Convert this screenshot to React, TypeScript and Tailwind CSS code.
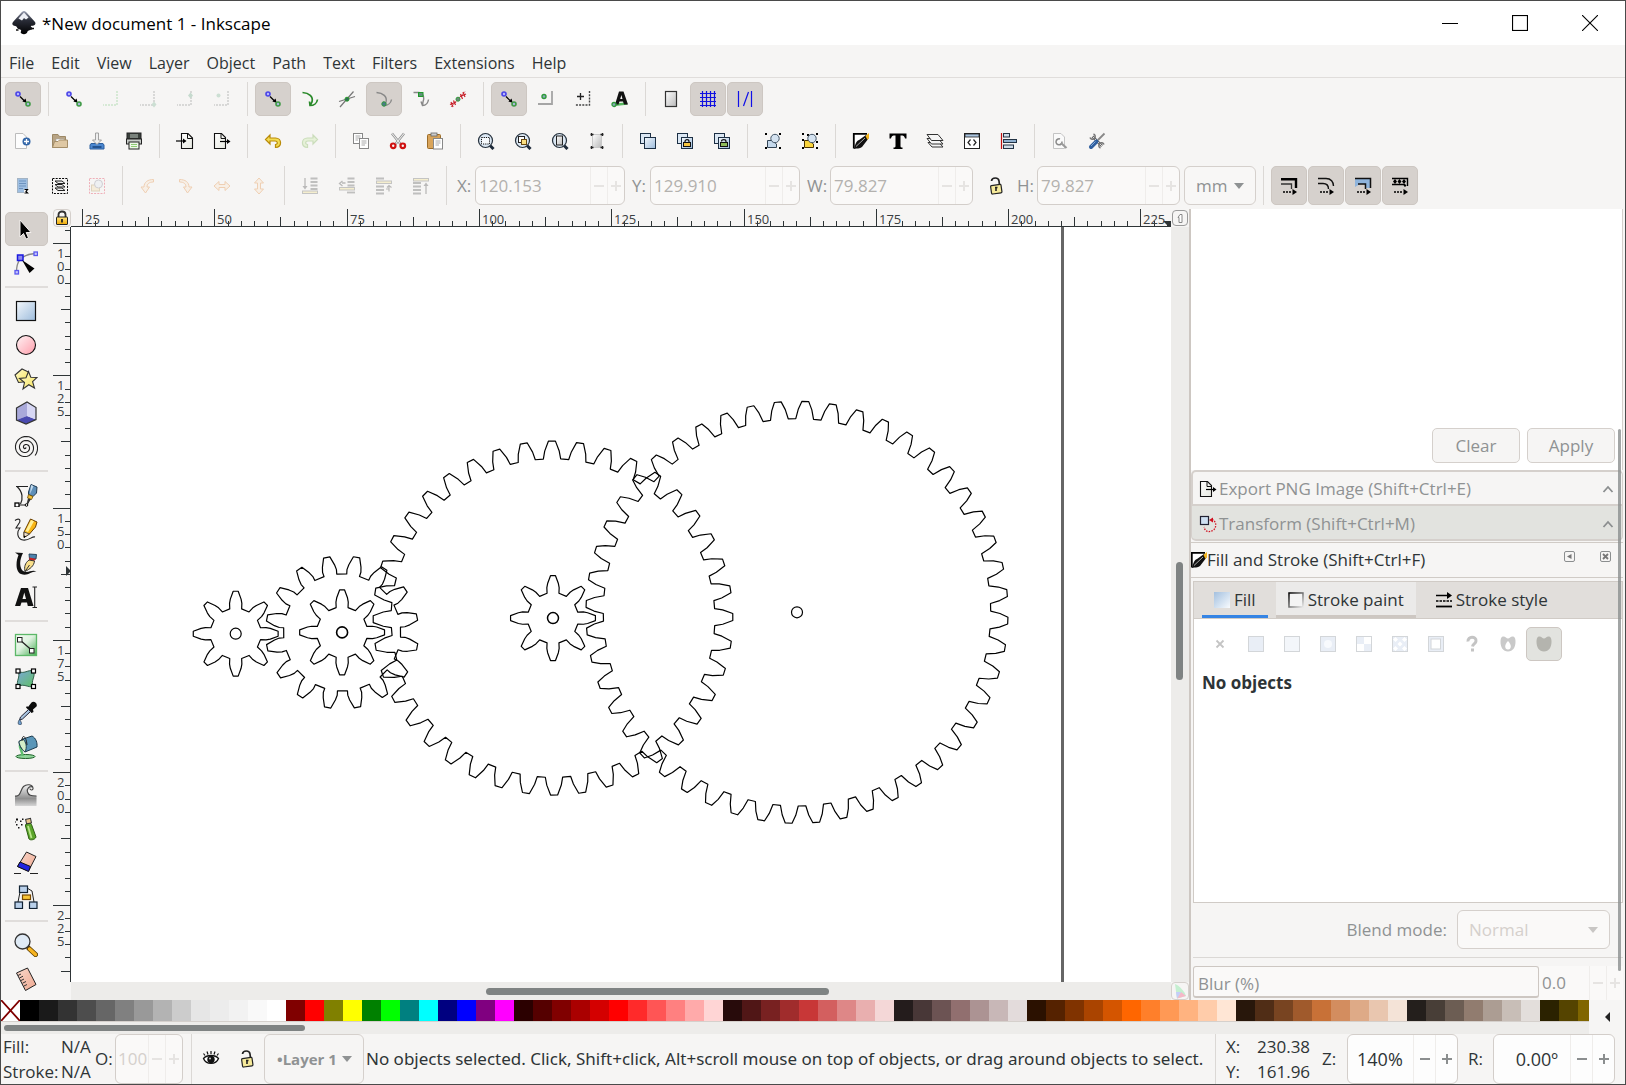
import React from "react";

/* ---------- drawing helpers ---------- */

type IconProps = { size?: number; faded?: boolean; children: React.ReactNode };

function Icon({ size = 18, faded, children }: IconProps) {
  return (
    <svg
      width={size}
      height={size}
      viewBox={`0 0 ${size} ${size}`}
      fill="none"
      aria-hidden="true"
      className={faded ? "shrink-0 opacity-30" : "shrink-0"}
    >
      {children}
    </svg>
  );
}

function Gradients() {
  return (
    <svg width="0" height="0" className="absolute" aria-hidden="true">
      <defs>
        <linearGradient id="gBlue" x1="0" y1="0" x2="1" y2="1">
          <stop offset="0" stopColor="#f4f8fc" />
          <stop offset="1" stopColor="#9dbcdc" />
        </linearGradient>
        <linearGradient id="gFill" x1="0" y1="0" x2="1" y2="1">
          <stop offset="0" stopColor="#a3c0df" />
          <stop offset="1" stopColor="#f8fbfe" />
        </linearGradient>
        <linearGradient id="gPink" x1="0" y1="0" x2="1" y2="1">
          <stop offset="0" stopColor="#fff4f5" />
          <stop offset="1" stopColor="#ff9dab" />
        </linearGradient>
        <linearGradient id="gGray" x1="0" y1="0" x2="1" y2="1">
          <stop offset="0" stopColor="#ffffff" />
          <stop offset="1" stopColor="#b9b9b9" />
        </linearGradient>
        <linearGradient id="gPaper" x1="0" y1="0" x2="1" y2="1">
          <stop offset="0" stopColor="#ffffff" />
          <stop offset="1" stopColor="#e6e8e0" />
        </linearGradient>
        <linearGradient id="gYellow" x1="0" y1="0" x2="1" y2="1">
          <stop offset="0" stopColor="#fffbd0" />
          <stop offset="1" stopColor="#f7e45a" />
        </linearGradient>
        <linearGradient id="gGold" x1="0" y1="0" x2="0" y2="1">
          <stop offset="0" stopColor="#ffe680" />
          <stop offset="1" stopColor="#f0a800" />
        </linearGradient>
        <linearGradient id="gGreen" x1="0" y1="0" x2="1" y2="1">
          <stop offset="0" stopColor="#f6fcf6" />
          <stop offset="0.45" stopColor="#dff2e0" />
          <stop offset="1" stopColor="#45ad52" />
        </linearGradient>
        <linearGradient id="gTeal" x1="0" y1="0" x2="1" y2="1">
          <stop offset="0" stopColor="#7aa7d8" />
          <stop offset="1" stopColor="#5fc064" />
        </linearGradient>
        <linearGradient id="gWave" x1="0" y1="0" x2="0" y2="1">
          <stop offset="0" stopColor="#f4f4f4" />
          <stop offset="0.65" stopColor="#8f8f8f" />
          <stop offset="1" stopColor="#d6d6d6" />
        </linearGradient>
        <linearGradient id="gSalmon" x1="0" y1="0" x2="1" y2="1">
          <stop offset="0" stopColor="#f8d8cb" />
          <stop offset="1" stopColor="#f0a890" />
        </linearGradient>
        <linearGradient id="gInk" x1="0" y1="0" x2="0" y2="1">
          <stop offset="0" stopColor="#9aa0b4" />
          <stop offset="0.4" stopColor="#2a2d38" />
          <stop offset="1" stopColor="#000000" />
        </linearGradient>
        <linearGradient id="gFrame" x1="0" y1="0" x2="1" y2="1">
          <stop offset="0" stopColor="#000000" />
          <stop offset="1" stopColor="#e4e4e4" />
        </linearGradient>
      </defs>
    </svg>
  );
}

/* ---------- snap icons ---------- */

const dashL = "M15 1 V15 H1";
const curve = "M1.5 2.5 C8 3 12.5 6.5 11 12 L9 15.5 M16.5 9.5 C16 13 13 15.5 9 15.5 L8.5 11.5";

const Snap = {
  nodes: (
    <>
      <circle cx="4" cy="4" r="2" stroke="#4a45e8" strokeWidth="1.6" fill="#b8b6fa" />
      <path d="M6 6.5 L11 11.5" stroke="#000" strokeWidth="1.2" />
      <path d="M12.6 12.8 L8.4 11.6 L11.6 8.4 Z" fill="#000" />
      <circle cx="14" cy="14" r="2" stroke="#3f9a46" strokeWidth="1.6" fill="#a9b9dc" />
    </>
  ),
  bbox: <path d={dashL} stroke="#8fcf8f" strokeWidth="2" strokeDasharray="2 1" />,
  corner: (
    <>
      <path d={dashL} stroke="#777" strokeWidth="1.5" strokeDasharray="2 1" />
      <path d="M15 11.5 L17.5 14.5 L15 17.5 L12.5 14.5 Z" fill="#6fae8a" />
    </>
  ),
  mid: (
    <>
      <path d={dashL} stroke="#777" strokeWidth="1.5" strokeDasharray="2 1" />
      <path d="M14.5 2.5 L17 5.5 L14.5 8.5 L12 5.5 Z" fill="#5a9f7a" />
    </>
  ),
  center: (
    <>
      <path d={dashL} stroke="#777" strokeWidth="1.5" strokeDasharray="2 1" />
      <circle cx="5.5" cy="5.5" r="2" fill="#6fae8a" />
    </>
  ),
  path: <path d={curve} stroke="#2a8a2a" strokeWidth="1.7" />,
  cross: (
    <>
      <path d="M2 17 L15.5 1.5 M1 11.5 L17 6.5" stroke="#777" strokeWidth="1.2" />
      <circle cx="9" cy="9.2" r="2" fill="#2f6f5a" stroke="#2a9a2a" />
    </>
  ),
  cusp: (
    <>
      <path d={curve} stroke="#888" strokeWidth="1.4" />
      <circle cx="9" cy="14" r="2.2" fill="#4a7a8a" stroke="#2f9a3a" />
    </>
  ),
  smooth: (
    <>
      <path d="M1.5 2.5 H7 C12 4 12.500 8 11 12 L10.500 15.500 M16.5 9.5 C16 13 14 15.500 10.500 15.500 L9 11.500" stroke="#888" strokeWidth="1.4" />
      <rect x="6.5" y="2.5" width="4.5" height="4" fill="#5f8f7a" stroke="#1f9a2a" />
    </>
  ),
  hash: (
    <>
      <path d="M2 17 L16 1.5" stroke="#c66" strokeWidth="1" />
      <path d="M2 12 L4 17 M4.5 10.5 L6.5 15 M1 14.5 L7 12 M11.5 4 L13.5 9 M14 2 L16 7 M11 6.5 L17 4" stroke="#c8202a" strokeWidth="1.2" />
      <circle cx="9" cy="9.2" r="2" fill="#6a8a7a" stroke="#2f9a3a" />
    </>
  ),
  objMid: (
    <>
      <path d="M15 1 V14 H1" stroke="#a5a5a5" strokeWidth="1.8" />
      <circle cx="7" cy="6.5" r="2" fill="#8ab" stroke="#2f9a3a" strokeWidth="1.4" />
    </>
  ),
  rotation: (
    <>
      <path d="M15.5 1 V15 H1" stroke="#444" strokeWidth="1.4" strokeDasharray="2 1.2" />
      <path d="M6.5 3 V10 M3 6.5 H10" stroke="#222" strokeWidth="1.3" />
    </>
  ),
  text: (
    <>
      <path d="M2 15 L16 13.500" stroke="#57b85f" strokeWidth="2.5" />
      <path d="M4 14.500 L8 1.5 H12.5 L17 14.5 H13 L12 11.500 H8.500 L7.500 14.500 Z M9.200 9 H11.5 L10.400 5 Z" fill="#111" fillRule="evenodd" />
      <circle cx="3" cy="14.500" r="2" fill="#8ab" stroke="#2f9a3a" strokeWidth="1.3" />
    </>
  ),
  page: <rect x="3.5" y="1.5" width="11" height="15" fill="url(#gGray)" stroke="#333" strokeWidth="1.2" />,
  grid: <path d="M3.5 1 V17 M7.5 1 V17 M11.5 1 V17 M15.5 1 V17 M1 3.5 H17 M1 7.5 H17 M1 11.5 H17 M1 15.5 H17" stroke="#1010e0" strokeWidth="1.2" />,
  guides: <path d="M2.5 1 V17 M15.5 1 V17 M7.500 16 L12.500 2" stroke="#1010e8" strokeWidth="1.2" />,
};

/* ---------- command icons ---------- */

const lens = (
  <>
    <path d="M12.5 13 L16.5 17" stroke="#1d2a3a" strokeWidth="3" />
    <circle cx="8.5" cy="8.5" r="7" fill="#dbe7f3" stroke="#26313d" strokeWidth="1.2" />
  </>
);
const twoRects = (
  <>
    <rect x="1.5" y="1.5" width="10" height="10" fill="#dbe7f3" stroke="#1c2f44" />
    <rect x="5.5" y="5.5" width="11" height="11" fill="url(#gBlue)" stroke="#1c2f44" />
  </>
);
const corners = <path d="M1 1 h2 v2 h-2z M15 1 h2 v2 h-2z M1 15 h2 v2 h-2z M15 15 h2 v2 h-2z" fill="#000" />;

const Cmd = {
  new: (
    <>
      <path d="M1.5 1.5 H9 L12.5 5 V16.5 H1.5 Z" fill="#fdfdfd" stroke="#bcbcbc" />
      <circle cx="12.5" cy="9.5" r="4" fill="#3467a8" />
      <path d="M12.5 7 V12 M10 9.5 H15" stroke="#fff" strokeWidth="1.3" />
    </>
  ),
  open: (
    <>
      <path d="M1.5 15.5 V2.5 H7 L8.5 4.5 H14.5 V15.5 Z" fill="#b8a485" stroke="#9c8866" />
      <path d="M5 7 H13 V11 H5 Z" fill="#fff" stroke="#aaa" strokeWidth=".6" />
      <path d="M1.5 15.5 L3.5 9.5 H7 L8.5 8 H16.5 V15.5 Z" fill="#dfc8a4" stroke="#a58e69" />
    </>
  ),
  save: (
    <>
      <path d="M3 11.5 H15 L16 13 V17 H2 V13 Z" fill="#4a86cf" stroke="#2c5f9e" />
      <path d="M4.5 15 H13.5" stroke="#123d73" strokeWidth="1.4" />
      <path d="M7.5 1 H10.5 V8 H13.5 L9 12.5 L4.5 8 H7.5 Z" fill="#eee" stroke="#999" strokeWidth=".9" />
    </>
  ),
  print: (
    <>
      <rect x="2" y="1" width="14" height="6" fill="#3a403c" stroke="#222" />
      <path d="M5 3 h8 M5 5 h8" stroke="#b9c4bc" strokeWidth="1.2" />
      <rect x="1.5" y="7" width="15" height="5" fill="#c8ccc8" stroke="#222" />
      <rect x="4" y="10" width="10" height="7" fill="#eef8e8" stroke="#222" />
      <path d="M6 12.5 H12 M6 14.5 H12" stroke="#8fcb74" />
    </>
  ),
  importDoc: (
    <>
      <path d="M5.5 1.5 H12 L16.5 6 V16.5 H5.5 Z" fill="url(#gPaper)" stroke="#111" strokeWidth="1.1" />
      <path d="M11.5 1.5 V6.5 H16.5" stroke="#111" />
      <path d="M0 9 H8" stroke="#000" strokeWidth="1.2" />
      <path d="M10.5 9 L7 6.5 V11.5 Z" fill="#000" />
    </>
  ),
  exportDoc: (
    <>
      <path d="M1.5 1.5 H8.5 L12.5 5.5 V16.5 H1.5 Z" fill="url(#gPaper)" stroke="#111" strokeWidth="1.1" />
      <path d="M8 1.5 V6.5 H12.5" stroke="#111" />
      <path d="M7 9.500 H15" stroke="#000" strokeWidth="1.2" />
      <path d="M17.5 9.500 L14 7 V12 Z" fill="#000" />
    </>
  ),
  undo: (
    <path d="M6 3 L1.5 7.5 L6 12 V9 H11 C14 9 14 12.5 11.5 12.5 V15.5 C18.5 15.5 18 6 11.5 6 H6 Z" fill="#f3dc52" stroke="#b98a08" strokeWidth="1.2" />
  ),
  redo: (
    <path d="M12 3 L16.5 7.5 L12 12 V9 H7 C4 9 4 12.5 6.5 12.5 V15.5 C-.5 15.5 0 6 6.5 6 H12 Z" fill="#c4ea9a" stroke="#69a83a" strokeWidth="1.2" />
  ),
  copy: (
    <>
      <rect x="1.5" y="1.5" width="9" height="10" fill="#fff" stroke="#888" />
      <path d="M3.5 4 H8.5 M3.5 6 H8.5 M3.5 8 H6" stroke="#aaa" />
      <rect x="7.5" y="6.5" width="9" height="10" fill="#fff" stroke="#888" />
      <path d="M9.5 9 H14.5 M9.5 11 H14.5 M9.5 13 H13" stroke="#aaa" />
    </>
  ),
  cut: (
    <>
      <path d="M3 1.5 L11.5 12 M15 1.5 L6.5 12" stroke="#888" strokeWidth="2.4" />
      <path d="M3 1.5 L11.5 12 M15 1.5 L6.5 12" stroke="#eee" strokeWidth="1.1" />
      <circle cx="4.2" cy="13.8" r="2.3" stroke="#cf1111" strokeWidth="2.2" />
      <circle cx="13.8" cy="13.8" r="2.3" stroke="#cf1111" strokeWidth="2.2" />
    </>
  ),
  paste: (
    <>
      <rect x="1.5" y="2.5" width="13" height="14" rx="1" fill="#d9a45a" stroke="#9c6c28" />
      <rect x="5" y="1" width="6" height="3" fill="#ccc" stroke="#666" strokeWidth=".8" />
      <rect x="7.5" y="6.5" width="9" height="10.5" fill="#fff" stroke="#888" />
      <path d="M9.5 9 H14.5 M9.5 11 H14.5 M9.5 13 H13" stroke="#aaa" />
    </>
  ),
  zoomSel: (
    <>
      {lens}
      <rect x="4.5" y="5.5" width="8" height="6.5" fill="#f7fafd" stroke="#111" strokeDasharray="1.2 1" />
    </>
  ),
  zoomDraw: (
    <>
      {lens}
      <rect x="4.5" y="4.5" width="6" height="6" fill="#fff" stroke="#222" />
      <rect x="7.5" y="7.5" width="5" height="5" fill="#fbdf80" stroke="#6a4a10" />
    </>
  ),
  zoomPage: (
    <>
      {lens}
      <rect x="5.5" y="4" width="6" height="9" fill="url(#gGray)" stroke="#222" />
    </>
  ),
  zoomWidth: (
    <>
      <rect x="4.500" y="2.500" width="9" height="13" fill="url(#gGray)" stroke="#c8c8c8" />
      <path d="M3.500 1 v3 M14.500 1 v3 M3.500 14 v3 M14.500 14 v3 M2.500 2.5 h3 M12.500 2.5 h3 M2.500 15.5 h3 M12.500 15.5 h3" stroke="#222" strokeWidth="1.3" />
    </>
  ),
  duplicate: twoRects,
  clone: (
    <>
      {twoRects}
      <path d="M9 11 V9.5 C9 7 13 7 13 9.5 V11" stroke="#111" strokeWidth="1.2" />
      <rect x="7.500" y="10.5" width="7" height="4" fill="#f7c640" stroke="#111" />
    </>
  ),
  unlink: (
    <>
      {twoRects}
      <path d="M8.500 9.500 C8.500 7 13 7 13 9.5 V11" stroke="#111" strokeWidth="1.2" />
      <rect x="7.500" y="10.5" width="7" height="4" fill="#8fbc5a" stroke="#111" />
    </>
  ),
  group: (
    <>
      {corners}
      <path d="M3.5 8.5 H8 L12.500 12 V15.5 H3.500 Z" fill="#c5d9ec" stroke="#345" />
      <circle cx="11" cy="6.5" r="4.200" fill="#d4e2f0" stroke="#456" />
    </>
  ),
  ungroup: (
    <>
      {corners}
      <path d="M1 7 h2 v2 h-2z M15 9 h2 v2 h-2z M6 2 h2 v2 h-2z" fill="#000" />
      <path d="M3.5 8.5 H8 L12.500 12 V15.5 H3.500 Z" fill="#fbd53c" stroke="#4a3300" />
      <circle cx="11" cy="6.5" r="4.200" fill="#d4e2f0" stroke="#456" />
    </>
  ),
  fillStroke: (
    <>
      <path d="M1 1 H15 L2.500 17 H1 Z" fill="#fff" />
      <path d="M1.800 16.5 V1.800 H15" stroke="#000" strokeWidth="1.8" />
      <path d="M2 17 C3 13 4 9 7 8 L14 3 L16.500 6.500 L10 15 C7.500 17 5 16 2 17 Z" fill="#111" />
      <path d="M13.500 4 L17 1 V6 L15.5 8 Z" fill="#f4b41a" />
      <path d="M4 14.500 L13 6" stroke="#aaa" />
    </>
  ),
  text: (
    <path d="M.500 1.5 H17.500 V6.500 H16 C15.500 4 14.5 3.5 11.500 3.500 V14 C11.500 15 12 15.5 13.500 15.500 V17 H4.500 V15.5 C6 15.5 6.500 15 6.500 14 V3.5 C3.500 3.5 2.500 4 2 6.500 H.500 Z" fill="#000" />
  ),
  layers: (
    <g stroke="#333" strokeWidth="1" fill="#f5f5f5">
      <path d="M2 10.500 H13 L17 15 H6 Z" />
      <path d="M1 6.500 H12 L17 12 H5.5 Z" />
      <path d="M1 2.500 H12 L17 8.500 H5.5 Z" />
    </g>
  ),
  xml: (
    <>
      <rect x="1.5" y="1.5" width="15" height="15" fill="#fff" stroke="#222" />
      <rect x="2" y="2" width="14" height="3" fill="#a9c4df" stroke="#222" strokeWidth=".8" />
      <path d="M7.5 7.5 L5 10.5 L7.5 13.5 M10.5 7.5 L13 10.5 L10.5 13.5" stroke="#222" strokeWidth="1.2" />
    </>
  ),
  align: (
    <>
      <path d="M1.5 1 V17" stroke="#c01010" strokeWidth="1.2" />
      <rect x="3.5" y="1.5" width="6" height="3.5" fill="#cfdce8" stroke="#223344" />
      <rect x="3.5" y="7.5" width="13" height="3" fill="#8fb0d0" stroke="#223344" />
      <rect x="3.5" y="13" width="10" height="3.5" fill="#cfdce8" stroke="#223344" />
    </>
  ),
  docProps: (
    <>
      <path d="M2.5 1.5 H10 L13.500 5 V16.5 H2.5 Z" fill="#fafafa" stroke="#c4c4c4" />
      <path d="M9 7 A3 3 0 1 0 11 9.500" stroke="#8a8a8a" strokeWidth="1.5" />
      <path d="M10 11 L15.500 16" stroke="#9a9a9a" strokeWidth="2.2" />
    </>
  ),
  prefs: (
    <>
      <path d="M4.500 4.500 L14 14" stroke="#666" strokeWidth="2.600" />
      <path d="M4.500 4.500 L14 14" stroke="#ddd" strokeWidth="1" />
      <path d="M5.500 2 A2.700 2.700 0 1 1 2 5.500 M12.500 16 A2.700 2.700 0 1 1 16 12.500" stroke="#777" strokeWidth="1.500" />
      <path d="M16.500 1.500 L10 8" stroke="#888" strokeWidth="1.8" />
      <path d="M8.500 9.500 L3 15" stroke="#2f5f9e" strokeWidth="4" strokeLinecap="round" />
      <path d="M7.500 9.500 L3 14" stroke="#7fa8d8" strokeWidth="1" />
    </>
  ),
};

/* ---------- selector bar icons ---------- */

const sheetLines = <path d="M9.5 1.5 h7 M9.5 5 h7 M9.5 8.5 h7 M9.5 12 h7" stroke="#444" strokeWidth="1.8" />;

const Sel = {
  all: (
    <>
      <rect x="3.5" y="1.5" width="10" height="14" fill="#9fbfe2" stroke="#a4b4c4" />
      <path d="M5 4 H12 M5 6.5 H12 M5 9 H12 M5 11.5 H9" stroke="#6d93bf" />
      <path d="M10 12 H15 V17 H10 Z" fill="#f6f5f4" />
      <path d="M10.5 12.500 h3 l-1.500 2 1.500 1.500 h-3" stroke="#000" strokeWidth="1.2" />
    </>
  ),
  layers: (
    <>
      <rect x="1.5" y="1.5" width="15" height="15" stroke="#000" strokeDasharray="2 1.2" />
      <g stroke="#222" fill="#eee">
        <path d="M4 11 H11 L14 13.5 H7 Z" />
        <path d="M4 7.5 H11 L14 10 H7 Z" />
        <path d="M4 4 H11 L14 6.5 H7 Z" />
      </g>
    </>
  ),
  deselect: (
    <>
      <rect x="1.5" y="1.5" width="15" height="15" stroke="#e01030" strokeDasharray="2 1.2" />
      <rect x="3.5" y="8" width="8" height="6" fill="#f4d9a0" stroke="#aa8844" />
      <circle cx="10.5" cy="7" r="4" fill="#dfe6f0" stroke="#778" />
    </>
  ),
  ccw: <path d="M14.5 2.500 C9 2.500 5 5 5 10 H2 L6.5 16 L10.500 10 H8 C8 7 10 5 14.5 5 Z" fill="#fbe3c8" stroke="#e07a20" />,
  cw: <path d="M3.5 2.500 C9 2.500 13 5 13 10 H16 L11.5 16 L7.500 10 H10 C10 7 8 5 3.5 5 Z" fill="#fbe3c8" stroke="#e07a20" />,
  flipH: <path d="M1 9 L6 4.500 V7.5 H12 V4.500 L17 9 L12 13.500 V10.5 H6 V13.500 Z" fill="#fbe3c8" stroke="#e07a20" />,
  flipV: <path d="M9 1 L13.500 6 H10.5 V12 H13.500 L9 17 L4.500 12 H7.5 V6 H4.500 Z" fill="#fbe3c8" stroke="#e07a20" />,
  bottom: (
    <>
      {sheetLines}
      <rect x="1.5" y="14" width="15" height="2.5" fill="#f5e17a" stroke="#555" />
      <path d="M4 1 V10" stroke="#333" strokeWidth="1.3" />
      <path d="M4 12.5 L1.5 9 H6.5 Z" fill="#333" />
    </>
  ),
  lower: (
    <>
      {sheetLines}
      <rect x="1.5" y="10.5" width="15" height="2.5" fill="#f5e17a" stroke="#555" />
      <path d="M9 15.5 H17" stroke="#444" strokeWidth="1.8" />
      <path d="M7.5 6 H4 M4.5 4 L1.5 6.5 L4.5 9" stroke="#333" strokeWidth="1.3" />
    </>
  ),
  raise: (
    <>
      <path d="M1 1.5 H9 M1 9.5 H9 M1 13 H9 M1 16.5 H9" stroke="#444" strokeWidth="1.8" />
      <rect x="1.5" y="4" width="15" height="2.5" fill="#f5e17a" stroke="#555" />
      <path d="M11 12 H14 M14 14.5 V9 M12 10.5 L14 8.5 L16.5 10.5" stroke="#333" strokeWidth="1.2" />
    </>
  ),
  top: (
    <>
      <path d="M1 6 H9 M1 9.5 H9 M1 13 H9 M1 16.5 H9" stroke="#444" strokeWidth="1.8" />
      <rect x="1.5" y="1.5" width="15" height="2.5" fill="#f5e17a" stroke="#555" />
      <path d="M14 17 V8" stroke="#333" strokeWidth="1.3" />
      <path d="M14 5.5 L11.5 9 H16.5 Z" fill="#333" />
    </>
  ),
};

const dashArrow = (
  <>
    <path d="M3 15 H12" stroke="#000" strokeWidth="1.5" strokeDasharray="2 1" />
    <path d="M17 15 L12.5 12 V18 Z" fill="#000" />
  </>
);
const Affect = {
  stroke: (
    <>
      <path d="M1 2.200 H16 V11" stroke="#000" strokeWidth="2.4" />
      <path d="M1 7 H11.5 V12" stroke="#333" strokeWidth="1.3" />
      {dashArrow}
    </>
  ),
  corner: (
    <>
      <path d="M1 1.5 H9 C14 1.5 16.5 5 16.5 9 M1 6.5 H6 C9.5 6.5 11.5 8 11.5 12" stroke="#111" strokeWidth="1.4" />
      {dashArrow}
    </>
  ),
  gradient: (
    <>
      <path d="M1 2 H16 V11 H11.5 V7 H6 L1 10 Z" fill="#8fb4dc" />
      <path d="M1 1.5 H16.5 V11 M4 7 H11.5 V12" stroke="#111" strokeWidth="1.5" />
      {dashArrow}
    </>
  ),
  pattern: (
    <>
      <path d="M1 1.5 H16.5 V9 M1 7.500 H14" stroke="#000" strokeWidth="1.4" />
      <path d="M2 4.5 l2 -2.500 2 2.500 -2 2.500z M6.500 4.5 l2 -2.500 2 2.500 -2 2.500z M11 4.500 l2 -2.500 2 2.500 -2 2.500z M12.500 8.500 l1.500 -1.500 1.500 1.500 -1.500 1.500z" fill="#000" />
      {dashArrow}
    </>
  ),
};

/* ---------- toolbox icons (24 px) ---------- */

function spiralPath(cx: number, cy: number, turns: number, endDeg: number, radius: number) {
  const steps = 90;
  const pts: string[] = [];
  for (let i = 0; i <= steps; i++) {
    const t = i / steps;
    const a = ((endDeg - turns * 360 * (1 - t)) * Math.PI) / 180;
    pts.push(`${(cx + radius * t * Math.cos(a)).toFixed(2)} ${(cy + radius * t * Math.sin(a)).toFixed(2)}`);
  }
  return `M${pts.join(" L")}`;
}

const Tool = {
  select: <path d="M6 3 V20 L9.5 16.5 L12 22 L14.5 21 L12.2 15.5 H17 Z" fill="#000" stroke="#f4f0ee" strokeWidth="1" />,
  node: (
    <>
      <path d="M2.5 21 C2.5 12 5 4 21 2.5" stroke="#888" strokeWidth="1.3" />
      <rect x="1" y="19.5" width="3.5" height="3.5" fill="#c7c7fb" stroke="#5a58ee" strokeWidth="1.3" />
      <rect x="3.5" y="4" width="5.5" height="5.5" fill="#8d8bea" stroke="#1a18e0" strokeWidth="1.5" />
      <rect x="20" y="1" width="3.5" height="3.5" fill="#c7c7fb" stroke="#5a58ee" strokeWidth="1.3" />
      <path d="M8 9 L20.5 17.5 L15.5 22 Z" fill="#000" />
    </>
  ),
  rect: <rect x="2.5" y="2.5" width="19" height="19" fill="url(#gBlue)" stroke="#111" strokeWidth="1.2" />,
  circle: <circle cx="12" cy="12" r="9.5" fill="url(#gPink)" stroke="#111" strokeWidth="1.1" />,
  star: (
    <>
      <path d="M1 8 L8 2 L14.5 5 L13.5 14.5 L4.5 15.5 Z" fill="url(#gYellow)" stroke="#333" strokeWidth="1.1" />
      <path d="M14.5 4.5 L16.8 10.3 L23 10.5 L18.6 14.7 L20.5 21 L14.8 17.7 L9 22 L10.5 15.5 L5.5 11.5 L12 10.8 Z" fill="url(#gYellow)" stroke="#333" strokeWidth="1.1" />
    </>
  ),
  cube: (
    <>
      <path d="M2.5 7 L13 1 V15 L2.5 19 Z" fill="#a9a9da" />
      <path d="M13 15 L22 18.5 L12 23 L2.5 19 Z" fill="#4a4ab0" />
      <path d="M13 1 L22 6.5 V18.5 L13 15 Z" fill="#d7d7f4" />
      <path d="M2.5 7 L13 1 L22 6.5 V18.5 L12 23 L2.5 19 Z" stroke="#333" strokeWidth="1.2" />
    </>
  ),
  spiral: <path d={spiralPath(11.5, 12.5, 3.1, 40, 12.5)} stroke="#222" strokeWidth="1.1" />,
  pen: (
    <>
      <path d="M2 3.5 H14 M3 3.5 C9 9 9 16 6.5 21 M3 22 H13 L17 14" stroke="#222" strokeWidth="1.2" />
      <rect x="1" y="20" width="4" height="4" fill="#fff" stroke="#000" strokeWidth="1.3" />
      <circle cx="12.5" cy="22" r="1.3" fill="#fff" stroke="#000" />
      <path d="M14.5 9 L17 1.5 L23 4 L22.5 10 L19 13.5 L14.5 11.5 Z" fill="#5f8fb8" stroke="#1f3a52" />
      <path d="M17 2 L19.5 3 L16 11 Z" fill="#c5dcee" />
      <path d="M14.5 11.5 L19 13.5 L17.5 16.5 L13.5 15 Z" fill="#f3c13a" stroke="#6a4a00" strokeWidth=".8" />
      <path d="M14 15.5 L17 16.5 L12.5 21 Z" fill="#333" />
    </>
  ),
  pencil: (
    <>
      <path d="M1 3.5 C4 1 7 2 5.5 5.5 L2 11 H6 C2.5 15 3 22 9 23 C15 24 18 19 21 20" stroke="#222" strokeWidth="1.1" />
      <path d="M10 15 L16.5 2 L23 5 L21.5 10 L15.5 17 L10 20.5 Z" fill="#f9b616" stroke="#6a3f00" />
      <path d="M17 3 L20 4.2 L14 15 L11.5 14 Z" fill="#fff09a" />
      <path d="M10 15 L15.5 17 L10 20.5 Z" fill="#f5e2c8" stroke="#333" strokeWidth=".8" />
      <path d="M10 18.5 L12 19.3 L10 21 Z" fill="#000" />
    </>
  ),
  calligraphy: (
    <>
      <path d="M1 1.5 L9 2 C6 8 5 14 8 19 C13 24 17 18 22.5 20.5 C17 20 14 25.5 7 23 C1 20 2 10 4.5 4 Z" fill="#111" />
      <path d="M15 3 L22.5 3.5 L22 8 L15.5 8 Z" fill="#4c83ad" stroke="#1d3a52" strokeWidth=".9" />
      <path d="M15.5 6.5 L22 8 L20 10 L15 9 Z" fill="#c22" />
      <path d="M15 9 L20.5 10 C20 15 16 18 11 20.5 C10 16 11 12 15 9 Z" fill="#f9df8a" stroke="#333" />
      <path d="M11 20.5 L15.5 14" stroke="#333" />
    </>
  ),
  text: (
    <>
      <path d="M1 21 L7 3 H14 L19.5 21 H13.8 L13 17.5 H7.5 L6.3 21 Z M8.5 14 H12 L10.3 7.5 Z" fill="#111" fillRule="evenodd" />
      <path d="M18.5 2 H23 M18.5 22.5 H23 M20.7 2 V22.5" stroke="#222" strokeWidth="1.1" />
    </>
  ),
  gradient: (
    <>
      <rect x="1.5" y="1.5" width="21" height="21" fill="url(#gGreen)" stroke="#5cb868" strokeWidth="1.300" />
      <path d="M6 7 L17.5 17" stroke="#222" strokeWidth="1.3" />
      <rect x="3.5" y="4.5" width="4.5" height="4.5" fill="#fff" stroke="#222" />
      <rect x="15.5" y="15.5" width="4.5" height="4.5" fill="#fff" stroke="#222" />
    </>
  ),
  mesh: (
    <>
      <path d="M4 4 C10 8 14 2 19.5 4 C22 10 16 14 19.5 19.5 C14 21 10 16 4 19.5 C1.5 14 7 10 4 4 Z" fill="url(#gTeal)" stroke="#2f5f4a" />
      {[[4, 4], [19.5, 4], [4, 19.5], [19.5, 19.5]].map(([x, y]) => (
        <rect key={`${x}-${y}`} x={x - 2} y={y - 2} width="4" height="4" fill="#fff" stroke="#000" strokeWidth="1.2" />
      ))}
    </>
  ),
  dropper: (
    <>
      <path d="M14 6 L17.5 1.5 C20 -.5 24 2.5 22.5 5.5 L19 8.5 L19.5 11 L17.5 12 L12 6.5 L13 5 Z" fill="#0c0c0c" />
      <path d="M14.5 8.5 L6.5 16 L5.5 19 L8.5 18 L16.5 10.5 Z" fill="#a9c4e0" stroke="#223" />
      <path d="M5.5 18.5 C3.5 21 4 24 6 24 C8 24 8 21.5 5.5 18.5 Z" fill="#6f9fd0" stroke="#345" strokeWidth=".8" />
    </>
  ),
  bucket: (
    <>
      <ellipse cx="11.500" cy="21.5" rx="9.5" ry="2" fill="#8fd69a" stroke="#1f5f2a" />
      <path d="M6 9 C5 13 8.500 16 8.5 21" stroke="#5fbf70" strokeWidth="2.5" />
      <path d="M9 4 L18 1 C22 3 23.5 8 23 12 L11 17 C7 14 5 9 5 6.5 Z" fill="#5a96b8" stroke="#1c3a4c" />
      <path d="M9 4 C12 7 13.5 12 11 17 C7 14 5 9 5 6.5 Z" fill="#d5eec8" stroke="#1c3a4c" />
      <path d="M8 6 C8 -1 12 0 13 10" stroke="#222" />
    </>
  ),
  tweak: (
    <>
      <path d="M1 23 V13 C7 14 6 7 9.500 3.5 C13 .5 18.5 1.500 19 5 C17 3.500 14 5 14 8 C13.500 11.500 16 13 22.500 13 V23 Z" fill="url(#gWave)" />
      <path d="M1 13 C7 14 6 7 9.500 3.5 C13 .5 18.5 1.500 19 5 C19.500 7.500 16 7.500 16 5.500 M19 4 C15 2.500 12.500 6 13.500 9 C14.500 12.500 17 13 22.500 13" stroke="#444" strokeWidth="1.100" />
    </>
  ),
  spray: (
    <>
      <path d="M11.5 9 C11 6 16 4.5 17.5 7.5 L22 20 C21 23 16 23.5 15 22 Z" fill="#5ba52a" stroke="#2c5f10" />
      <path d="M14 9 L17.5 21" stroke="#b9e58a" strokeWidth="1.8" />
      <rect x="12" y="2" width="5" height="4.5" fill="#e9c48a" stroke="#333" transform="rotate(-12 14 4)" />
      <path d="M2 1.5 h2 v2 h-2z M6 3.5 h1.5 v1.5 h-1.5z M2 7 h1.5 v1.5 h-1.5z M8 1.5 h1.5 v1.5 h-1.5z M7 7 h1.5 v1.5 h-1.5z M4 10 h1.5 v1.5 h-1.5z M1 4.5 h1 v1 h-1z" fill="#111" />
    </>
  ),
  eraser: (
    <>
      <path d="M12.5 1 L22 5.5 L14.5 20 L3.5 15.5 Z" fill="url(#gSalmon)" stroke="#222" />
      <path d="M6 11 L16.5 15.5 L14.5 20.5 L3.5 15.5 Z" fill="#2323e0" stroke="#111" />
      <path d="M0 22.5 H7 M16 22.5 H24" stroke="#222" strokeWidth="1.2" />
    </>
  ),
  connector: (
    <>
      <path d="M6 7 L4 17 M13 3 L18 6 L20 17" stroke="#222" />
      <rect x="5.5" y="1" width="8" height="6.5" fill="#b9d0ea" stroke="#123" strokeWidth="1.2" />
      <rect x="8.5" y="10" width="8" height="4.5" fill="#f8c638" stroke="#7a4a00" strokeWidth="1.2" />
      <rect x="1" y="17" width="7.5" height="6.5" fill="#b9d0ea" stroke="#123" strokeWidth="1.2" />
      <rect x="15.5" y="17" width="7.5" height="6.5" fill="#b9d0ea" stroke="#123" strokeWidth="1.2" />
    </>
  ),
  zoom: (
    <>
      <path d="M15 15.500 L21.500 21.500" stroke="#5a3c00" strokeWidth="5" strokeLinecap="round" />
      <path d="M15.500 16 L21.500 21.500" stroke="#f7b420" strokeWidth="3.4" strokeLinecap="round" />
      <circle cx="8.5" cy="8.5" r="7.5" fill="#dfeaf5" stroke="#333" strokeWidth="1.3" />
    </>
  ),
  measure: (
    <>
      <path d="M2.5 6 L13.5 1 L22 17.5 L11.5 23.5 Z" fill="url(#gSalmon)" stroke="#222" />
      <path d="M4 8.5 L7 7 M5.5 11 L9 9.2 M7 13.5 L10 12 M8.5 16.2 L12 14.5 M10 19 L13 17.5" stroke="#333" />
    </>
  ),
};

/* ---------- controls ---------- */

function ToolButton({ label, active, tall, children }: { label: string; active?: boolean; tall?: boolean; children: React.ReactNode }) {
  return (
    <button
      type="button"
      aria-label={label}
      className={[
        "flex w-9 shrink-0 items-center justify-center rounded-[5px] border",
        tall ? "h-[39px]" : "h-[34px]",
        active ? "border-[#cdc7c2] bg-[#d6d1cd]" : "border-transparent",
      ].join(" ")}
    >
      {children}
    </button>
  );
}

const VSep = () => <div className="mx-[7px] w-px shrink-0 self-stretch bg-[#dbd8d5]" />;
const HSep = () => <div className="my-1.5 h-0.5 w-[43px] shrink-0 bg-[#e0dddb]" />;

type Entry = [string, React.ReactNode, ("on" | "off")?];

function Group({ items, tall }: { items: Entry[]; tall?: boolean }) {
  return (
    <div className="flex gap-px">
      {items.map(([label, art, state]) => (
        <ToolButton key={label} label={label} active={state === "on"} tall={tall}>
          <Icon faded={state === "off"}>{art}</Icon>
        </ToolButton>
      ))}
    </div>
  );
}

type SpinProps = { id: string; label: string; value: string; className: string; inputClass: string; cell: string; live?: boolean };

function Spin({ id, label, value, className, inputClass, cell, live }: SpinProps) {
  const tone = live ? "text-[#8b8e8f]" : "text-[#e6e4e2]";
  return (
    <div className={`flex shrink-0 overflow-hidden rounded-md border border-[#d3ceca] ${live ? "bg-[#fdfdfd]" : "bg-[#faf9f8]"} ${className}`}>
      <input id={id} aria-label={label} defaultValue={value} className={`min-w-0 flex-1 bg-transparent outline-none ${inputClass}`} />
      <button type="button" aria-label={`Decrease ${label}`} className={`flex shrink-0 items-center justify-center border-l border-[#efedeb] ${cell} ${tone}`}>
        <svg width="10" height="10" viewBox="0 0 10 10" aria-hidden="true"><path d="M0 5 H10" stroke="currentColor" strokeWidth="2" /></svg>
      </button>
      <button type="button" aria-label={`Increase ${label}`} className={`flex shrink-0 items-center justify-center border-l border-[#efedeb] ${cell} ${tone}`}>
        <svg width="10" height="10" viewBox="0 0 10 10" aria-hidden="true"><path d="M0 5 H10 M5 0 V10" stroke="currentColor" strokeWidth="2" /></svg>
      </button>
    </div>
  );
}

const OpenLock = (
  <>
    <path d="M4.500 4 C5 0 11.500 0 12 4 L12.500 8" stroke="#222" strokeWidth="1.7" />
    <rect x="4" y="8" width="10.500" height="8.500" rx="1" fill="#f6ea9a" stroke="#222" strokeWidth="1.200" transform="rotate(-8 9 12)" />
    <path d="M9 10 V14 M8 10.500 H10.500" stroke="#222" strokeWidth="1.6" />
  </>
);

function Caret({ className }: { className: string }) {
  return (
    <svg width="10" height="6" viewBox="0 0 10 6" aria-hidden="true" className={`pointer-events-none absolute ${className}`}>
      <path d="M0 0 H10 L5 6 Z" fill="currentColor" />
    </svg>
  );
}

/* ---------- gears ---------- */

type Profile = [number, number][];
const P8: Profile = [[25.5, 6], [31, 6.2], [35, 5.4], [42.5, 2.5]];
const P16: Profile = [[58.6, 6.5], [63, 7.1], [68, 6.2], [76.5, 3.2]];
const P40: Profile = [[160.6, 8.6], [168.5, 7.2], [178.4, 3.5]];
const P48: Profile = [[193.7, 8.9], [203, 6.8], [211, 3.4]];

function gearPath(cx: number, cy: number, teeth: number, profile: Profile, turn: number, sx = 1, sy = 1) {
  const pts: string[] = [];
  const at = (r: number, a: number) => pts.push(`${(cx + sx * r * Math.cos(a)).toFixed(2)} ${(cy + sy * r * Math.sin(a)).toFixed(2)}`);
  for (let i = 0; i < teeth; i++) {
    const mid = ((i * 360) / teeth + turn) * (Math.PI / 180);
    profile.forEach(([r, h]) => at(r, mid - h / r));
    [...profile].reverse().forEach(([r, h]) => at(r, mid + h / r));
  }
  return `M${pts.join(" L")} Z`;
}

function Drawing() {
  return (
    <svg width="100%" height="100%" className="block" role="img" aria-label="Drawing canvas with a gear train">
      <rect x="990" y="0" width="3" height="100%" fill="#666666" />
      <g fill="none" stroke="#000" strokeWidth="1.2" strokeLinejoin="round">
        <path d={gearPath(164.7, 406.7, 8, P8, 0)} />
        <circle cx="164.7" cy="406.7" r="5.5" />
        <path d={gearPath(271.1, 405.4, 16, P16, 10.9)} />
        <path d={gearPath(271.1, 405.4, 8, P8, 0)} />
        <circle cx="271.1" cy="405.4" r="5.5" strokeWidth="1.6" />
        <path d={gearPath(482, 391.1, 40, P40, -0.35, 1.008, 0.992)} />
        <path d={gearPath(482, 391.1, 8, P8, 0)} />
        <circle cx="482" cy="391.1" r="5.5" strokeWidth="1.5" />
        <path d={gearPath(726, 385.3, 48, P48, 2.27)} />
        <circle cx="726" cy="385.3" r="5.5" />
      </g>
    </svg>
  );
}

/* ---------- rulers ---------- */

const STEP = 13.23;

function TopRuler() {
  const ticks = [];
  for (let i = 0; i < 84; i++) {
    const x = Math.round(11 + i * STEP);
    if (x > 1099) break;
    const top = i % 10 === 0 ? 0 : i % 5 === 0 ? 8 : 12;
    ticks.push(<path key={i} d={`M${x + 0.5} ${top} V17`} />);
  }
  return (
    <svg width="100%" height="18" className="block" aria-label="Horizontal ruler">
      <g stroke="#2e3436">{ticks}</g>
      <rect x="0" y="17" width="100%" height="1" fill="#2e3436" />
      <g fontSize="13" fill="#3b4042">
        {[25, 50, 75, 100, 125, 150, 175, 200, 225].map((n, i) => (
          <text key={n} x={Math.round(14 + i * 10 * STEP)} y="15">{n}</text>
        ))}
      </g>
      <path d="M1092 12 H1100 V18 H1098 Z" fill="#2e3436" />
    </svg>
  );
}

function SideRuler() {
  const ticks = [];
  for (let i = -1; i < 57; i++) {
    const y = Math.round(16 + i * STEP);
    const left = i % 10 === 0 ? 0 : i % 5 === 0 ? 8 : 12;
    ticks.push(<path key={i} d={`M${left} ${y + 0.5} H17`} />);
  }
  return (
    <div className="relative h-full">
      <svg width="18" height="100%" className="block" aria-label="Vertical ruler">
        <g stroke="#2e3436">{ticks}</g>
        <rect x="17" y="0" width="1" height="100%" fill="#2e3436" />
        <path d="M13 339 L18 344 L13 349 Z" fill="#2e3436" />
      </svg>
      {[100, 125, 150, 175, 200, 225].map((n, i) => (
        <span
          key={n}
          className="absolute left-1 w-2 text-[13px] leading-[13px] break-all text-[#3b4042]"
          style={{ top: Math.round(20 + i * 10 * STEP) }}
        >
          {n}
        </span>
      ))}
    </div>
  );
}

/* ---------- palette ---------- */

const PALETTE =
  "000000 1a1a1a 333333 4d4d4d 666666 808080 999999 b3b3b3 cccccc e6e6e6 ececec f2f2f2 f9f9f9 ffffff 800000 ff0000 808000 ffff00 008000 00ff00 008080 00ffff 000080 0000ff 800080 ff00ff 2b0000 550000 800000 aa0000 d40000 ff0000 ff2a2a ff5555 ff8080 ffaaaa ffd5d5 280b0b 501616 782121 a02c2c c83737 d35f5f de8787 e9afaf f4d7d7 241c1c 483737 6c5353 916f6f ac9393 c8b7b7 e3dbdb 2b1100 552200 803300 aa4400 d45500 ff6600 ff7f2a ff9955 ffb380 ffccaa ffe6d5 28170b 502d16 784421 a05a2c c87137 d38d5f deaa87 e9c6af f4e3d7 241f1c 483e37 6c5d53 917c6f ac9d93 c8beb7 e3dedb 2b2200 554400 806600".split(" ");

function Palette() {
  return (
    <div className="flex h-[22px] shrink-0 border-b border-[#d5d0cc]">
      <div className="flex min-w-0 flex-1 overflow-hidden">
        <button type="button" aria-label="None" className="h-[21px] w-[19px] shrink-0 bg-white">
          <svg width="19" height="21" viewBox="0 0 19 21" aria-hidden="true"><path d="M0 0 L19 21 M19 0 L0 21" stroke="#800000" strokeWidth="1.8" /></svg>
        </button>
        {PALETTE.map((c, i) => (
          <button key={i} type="button" aria-label={`#${c}`} className="h-[21px] w-[19px] shrink-0" style={{ backgroundColor: `#${c}` }} />
        ))}
      </div>
      <button type="button" aria-label="Palette menu" className="flex h-[33px] w-9 shrink-0 items-center justify-center bg-[#f6f5f4]">
        <svg width="5" height="10" viewBox="0 0 5 10" aria-hidden="true"><path d="M5 0 V10 L0 5 Z" fill="#222" /></svg>
      </button>
    </div>
  );
}

/* ---------- right dock ---------- */

const heart = "M9 16.5 C4 16.5 1.5 12 1.500 7 C1.5 3 2.5 1.5 4.5 1.5 C6.5 1.5 7.5 3.5 9 3.5 C10.5 3.5 11.5 1.5 13.5 1.5 C15.5 1.5 16.5 3 16.5 7 C16.5 12 14 16.5 9 16.5 Z";
const swatch = <rect x="1.5" y="1.5" width="15" height="15" fill="#e9eef6" stroke="#d3d6d9" />;

const PAINTS: [string, React.ReactNode][] = [
  ["No paint", <path d="M5.5 5.500 L12.5 12.500 M12.5 5.500 L5.5 12.500" stroke="#c4c4c4" strokeWidth="1.8" />],
  ["Flat color", swatch],
  ["Linear gradient", <rect x="1.5" y="1.5" width="15" height="15" fill="#f3f6fa" stroke="#d3d6d9" />],
  ["Radial gradient", <>{swatch}<circle cx="9" cy="9" r="4" fill="#f8fafd" /></>],
  ["Mesh gradient", <>{swatch}<path d="M9 2 H16 V9 H9 Z M2 9 H9 V16 H2 Z" fill="#fff" /></>],
  ["Pattern", <>{swatch}<path d="M4.500 2 l2.500 2.500 -2.500 2.500 -2.500 -2.500z M9 6.500 l2.500 2.500 -2.500 2.500 -2.500 -2.500z M13.500 2 l2.500 2.500 -2.500 2.500 -2.500 -2.500z M4.500 11 l2.500 2.500 -2.500 2.500 -2.500 -2.500z M13.500 11 l2.500 2.500 -2.500 2.500 -2.500 -2.500z" fill="#fff" /></>],
  ["Swatch", <>{swatch}<rect x="4" y="4" width="9.5" height="10" fill="#fff" stroke="#d3d6d9" /></>],
  ["Unknown", <path d="M5 6.5 C4.5 1 13.5 1 13 6 C13 8.5 10 8.5 9.5 11.5 M9.5 13.5 V16.5" stroke="#c4c4c4" strokeWidth="3" />],
  ["Even-odd", <><path d={heart} fill="#c9c9c9" /><path d="M9 6 C13 10 12.500 14.500 9 14.500 C5.500 14.5 5 10 9 6 Z" fill="#fff" /></>],
  ["Non-zero", <path d={heart} fill="#b4b4ae" />],
];

function ChevronUp() {
  return (
    <svg width="12" height="8" viewBox="0 0 12 8" fill="none" aria-hidden="true"><path d="M1.5 7 L6 2 L10.5 7" stroke="#8b8e8f" strokeWidth="1.8" /></svg>
  );
}

function Dock() {
  return (
    <aside className="relative flex w-[436px] shrink-0 flex-col overflow-hidden border-l-2 border-[#cdc7c2] pr-0.5">
      <div className="flex h-[261px] shrink-0 items-end justify-end gap-[7px] border-r border-[#d5d0cc] bg-white pr-[7px] pb-[7px]">
        <button type="button" className="h-[35px] w-[88px] rounded-[5px] border border-[#d5d0cc] bg-[#f6f5f4] text-[17px] text-[#8f9293]">Clear</button>
        <button type="button" className="h-[35px] w-[88px] rounded-[5px] border border-[#d5d0cc] bg-[#f6f5f4] text-[17px] text-[#8f9293]">Apply</button>
      </div>
      <button type="button" className="flex h-9 shrink-0 items-center rounded-t-[5px] border-2 border-r border-[#d5d0cc] bg-[#f6f5f4] pt-0.5 pr-2 pl-1.5 text-left text-[17px] text-[#8f9293]">
        <Icon>{Cmd.exportDoc}</Icon>
        <span className="ml-0.5 flex-1">Export PNG Image (Shift+Ctrl+E)</span>
        <ChevronUp />
      </button>
      <button type="button" className="flex h-[35px] shrink-0 items-center rounded-b-[5px] border-r border-b-2 border-l border-[#d5d0cc] bg-[#e2e3df] pt-0.5 pr-2 pl-[7px] text-left text-[17px] text-[#8f9293]">
        <Icon>
          <rect x="1.5" y="1.5" width="8" height="8" fill="#cfe0f2" stroke="#223" strokeWidth="1.2" />
          <path d="M13 4.500 C17 6 18 11 15 14.5 C11 18 6 17 5 12" stroke="#d01020" strokeWidth="1.3" strokeDasharray="1.500 1.2" />
          <path d="M10 5 L14 2.5 V7.500 Z" fill="#d01020" />
        </Icon>
        <span className="ml-0.5 flex-1">Transform (Shift+Ctrl+M)</span>
        <ChevronUp />
      </button>
      <div className="mt-px flex h-9 shrink-0 items-center border-t border-b border-[#d0cbc6]">
        <svg width="16" height="18" viewBox="1 0 16 18" fill="none" aria-hidden="true" className="shrink-0">{Cmd.fillStroke}</svg>
        <h2 className="flex-1 text-[17px] text-[#2e3436]">Fill and Stroke (Shift+Ctrl+F)</h2>
        <button type="button" aria-label="Iconify dock" className="mr-[25px] mb-2">
          <svg width="11" height="11" viewBox="0 0 11 11" aria-hidden="true"><rect x=".5" y=".5" width="10" height="10" rx="1.5" fill="none" stroke="#8b8e8f" /><path d="M7.5 3 V8 L3 5.5 Z" fill="#777" /></svg>
        </button>
        <button type="button" aria-label="Close dock" className="mr-3 mb-2">
          <svg width="11" height="11" viewBox="0 0 11 11" aria-hidden="true"><rect x=".5" y=".5" width="10" height="10" rx="1.5" fill="none" stroke="#8b8e8f" /><path d="M3 3 L8 8 M8 3 L3 8" stroke="#777" strokeWidth="1.8" /></svg>
        </button>
      </div>

      <section className="mt-[3px] ml-0.5 flex h-[322px] shrink-0 flex-col border border-[#d0cbc6] bg-white">
        <div role="tablist" className="flex h-[37px] shrink-0 gap-2 border-b border-[#d0cbc6] bg-[#e1dedb] pl-2 text-[17px] text-[#2e3436]">
          <button type="button" role="tab" aria-selected="true" className="flex items-center gap-1 border-b-[3px] border-[#3584e4] px-3 pt-0.5">
            <svg width="16" height="16" aria-hidden="true"><rect width="16" height="16" fill="url(#gFill)" /></svg>Fill
          </button>
          <button type="button" role="tab" aria-selected="false" className="flex items-center gap-1 border-b-[3px] border-[#cdc7c2] bg-[#ebeae9] px-3 pt-0.5">
            <svg width="16" height="16" aria-hidden="true"><rect x="1" y="1" width="14" height="14" fill="#f4f4f4" stroke="url(#gFrame)" strokeWidth="1.5" /></svg>Stroke paint
          </button>
          <button type="button" role="tab" aria-selected="false" className="flex items-center gap-1 border-b-[3px] border-transparent px-3 pt-0.5">
            <svg width="16" height="16" aria-hidden="true" fill="none"><path d="M0 3.5 H12" stroke="#000" strokeWidth="1.5" /><path d="M11 0 L16 3.5 L11 7 Z" fill="#000" /><path d="M0 9 H16" stroke="#000" strokeWidth="1.3" strokeDasharray="2.5 1" /><path d="M0 14.5 H16" stroke="#000" strokeWidth="1.8" /></svg>Stroke style
          </button>
        </div>
        <div className="mt-2 ml-2 flex">
          {PAINTS.map(([label, art], i) => (
            <button
              key={label}
              type="button"
              aria-label={label}
              className={i === 9 ? "flex h-[34px] w-9 items-center justify-center rounded-[5px] border border-[#cdc7c2] bg-[#e2e3df]" : "flex h-[34px] w-9 items-center justify-center"}
            >
              <Icon>{art}</Icon>
            </button>
          ))}
        </div>
        <p className="mt-2.5 ml-2 text-[17px] leading-6 font-bold text-[#2e3436]">No objects</p>
      </section>

      <div className="mt-[7px] flex h-[39px] shrink-0 items-center justify-end pr-[13px] text-[17px]">
        <label htmlFor="blend" className="mr-2.5 text-[#8f9293]">Blend mode:</label>
        <span className="relative flex items-center text-[#c8c6c4]">
          <select id="blend" className="h-[39px] w-[153px] appearance-none rounded-md border border-[#d5d0cc] bg-[#faf9f8] pl-[11px] text-[#d5d0cc]">
            <option>Normal</option>
          </select>
          <Caret className="right-3" />
        </span>
      </div>
      <div className="mt-2 ml-0.5 h-px shrink-0 bg-[#dbd8d5]" />
      <div className="mt-2 ml-0.5 flex h-[34px] shrink-0 text-[17px] text-[#8f9293]">
        <label htmlFor="blur" className="flex h-8 min-w-0 flex-1 items-end rounded-[3px] border border-b-2 border-[#cdc7c2] bg-[#faf9f8] pl-1 leading-6">Blur (%)</label>
        <div className="flex w-[84px] bg-[#faf9f8]">
          <input id="blur" defaultValue="0.0" className="min-w-0 flex-1 bg-transparent pl-[3px] outline-none" />
          {["M0 5 H10", "M0 5 H10 M5 0 V10"].map((d) => (
            <button key={d} type="button" aria-label={d.length > 9 ? "Increase blur" : "Decrease blur"} className="flex w-[17px] items-center justify-center border-l border-[#efedeb]">
              <svg width="10" height="10" viewBox="0 0 10 10" aria-hidden="true"><path d={d} stroke="#e6e4e2" strokeWidth="2" /></svg>
            </button>
          ))}
        </div>
      </div>
      <div className="absolute top-[220px] right-1 h-[542px] w-[3px] rounded-full bg-[#8b8e8f]/80" />
    </aside>
  );
}

/* ---------- bars ---------- */

function TitleBar() {
  return (
    <header className="flex h-11 shrink-0 items-center bg-white pl-[11px] text-[17px] text-black">
      <svg width="24" height="26" viewBox="0 0 24 26" aria-hidden="true" className="mr-1.5">
        <path d="M12 1 C13.5 1 14 2 15 3 L23 12 C24.5 14.5 22 15.5 19.5 15.8 C17 16.5 22 18 20 19.5 C17 20.5 17 20 15.5 21.5 C15 24 12 25 9.5 23.5 C7 21.5 11 21 8 19.5 C4 18.5 6 17 3.5 16 C.5 15.5 -.5 14 1 12 L9 3 C10 2 10.5 1 12 1 Z" fill="url(#gInk)" />
        <path d="M12 2.5 L16.500 7.5 L14 9.500 L12 8 L10 10.500 L6.500 8.500 Z" fill="#eef0f6" />
        <path d="M19 18.5 h3 M4 20 h2.5" stroke="#111" strokeWidth="1.5" />
      </svg>
      <h1 className="flex-1 pt-0.5">*New document 1 - Inkscape</h1>
      <div className="flex items-center">
        <button type="button" aria-label="Minimize" className="flex h-11 w-[70px] items-center justify-center">
          <svg width="16" height="16" aria-hidden="true"><path d="M0 8.5 H16" stroke="#000" /></svg>
        </button>
        <button type="button" aria-label="Maximize" className="flex h-11 w-[70px] items-center justify-center">
          <svg width="16" height="16" aria-hidden="true"><rect x=".5" y=".5" width="15" height="15" fill="none" stroke="#000" strokeWidth="1.2" /></svg>
        </button>
        <button type="button" aria-label="Close" className="flex h-11 w-[70px] items-center justify-center">
          <svg width="16" height="16" aria-hidden="true"><path d="M0 0 L16 16 M16 0 L0 16" stroke="#000" strokeWidth="1.1" /></svg>
        </button>
      </div>
    </header>
  );
}

const MENUS = ["File", "Edit", "View", "Layer", "Object", "Path", "Text", "Filters", "Extensions", "Help"];

const TOOLS: [keyof typeof Tool, string][][] = [
  [["select", "Select"], ["node", "Edit nodes"]],
  [["rect", "Rectangle"], ["circle", "Ellipse"], ["star", "Star"], ["cube", "3D box"], ["spiral", "Spiral"]],
  [["pen", "Bezier pen"], ["pencil", "Pencil"], ["calligraphy", "Calligraphy"], ["text", "Text"]],
  [["gradient", "Gradient"], ["mesh", "Mesh"], ["dropper", "Dropper"], ["bucket", "Paint bucket"]],
  [["tweak", "Tweak"], ["spray", "Spray"], ["eraser", "Eraser"], ["connector", "Connector"]],
  [["zoom", "Zoom"], ["measure", "Measure"]],
];

function Toolbox() {
  return (
    <nav aria-label="Tools" className="flex w-[52px] shrink-0 flex-col overflow-hidden pt-[3px] pl-1">
      {TOOLS.map((group, g) => (
        <React.Fragment key={g}>
          {g > 0 && <HSep />}
          {group.map(([name, label]) => (
            <button
              key={name}
              type="button"
              aria-label={label}
              className={
                name === "select"
                  ? "flex h-[34px] w-[43px] shrink-0 items-center justify-center rounded-[5px] border border-[#cdc7c2] bg-[#d6d1cd] pr-0.5"
                  : "flex h-[34px] w-[43px] shrink-0 items-center justify-center pr-0.5"
              }
            >
              <Icon size={24}>{Tool[name]}</Icon>
            </button>
          ))}
        </React.Fragment>
      ))}
    </nav>
  );
}

function StatusBar() {
  return (
    <footer className="flex h-[50px] shrink-0 items-center pl-0.5 text-[17px] whitespace-nowrap text-[#2e3436]">
      <dl className="grid w-[90px] shrink-0 grid-cols-[58px_1fr] leading-[25px]">
        <dt>Fill:</dt>
        <dd>N/A</dd>
        <dt>Stroke:</dt>
        <dd>N/A</dd>
      </dl>
      <label htmlFor="opacity" className="w-[22px] shrink-0 pl-0.5">O:</label>
      <Spin id="opacity" label="Opacity" value="100" className="h-[50px] w-[68px]" inputClass="pl-0.5 text-[#d5d0cc]" cell="w-[17px]" />
      <div className="mx-2 h-full w-px shrink-0 bg-[#dbd8d5]" />
      <button type="button" aria-label="Toggle layer visibility" className="ml-0.5 flex w-[18px] shrink-0 justify-center">
        <Icon>
          <path d="M1.5 8.5 C5 4.5 13 4.5 16.5 8.5 C14 15 4 15 1.5 8.5 Z" fill="#fff" stroke="#111" strokeWidth="1.3" />
          <circle cx="9" cy="9.5" r="3.7" fill="#111" />
          <circle cx="8" cy="8.5" r="1" fill="#ccc" />
          <path d="M3 5.5 L1.5 3.5 M6 4.5 L5 1.5 M9 4 V1 M12 4.5 L13 1.5 M15 5.5 L16.5 3.5" stroke="#111" strokeWidth="1.2" />
        </Icon>
      </button>
      <button type="button" aria-label="Toggle layer lock" className="mr-2 ml-[18px] shrink-0">
        <Icon>{OpenLock}</Icon>
      </button>
      <span className="relative flex shrink-0 items-center text-[#8f9293]">
        <select aria-label="Current layer" className="h-[50px] w-[100px] appearance-none rounded-md border border-[#d5d0cc] bg-[#f6f5f4] pl-3 text-[15px] font-bold text-[#8f9293]">
          <option>•Layer 1</option>
        </select>
        <Caret className="right-3" />
      </span>
      <p className="ml-0.5 min-w-0 flex-1 overflow-hidden font-['Noto_Sans','Open_Sans',sans-serif]">No objects selected. Click, Shift+click, Alt+scroll mouse on top of objects, or drag around objects to select.</p>
      <div className="h-full w-px shrink-0 bg-[#dbd8d5]" />
      <dl className="ml-2.5 grid shrink-0 grid-cols-[31px_56px] leading-[25px]">
        <dt>X:</dt>
        <dd>230.38</dd>
        <dt>Y:</dt>
        <dd>161.96</dd>
      </dl>
      <label htmlFor="zoom" className="ml-[9px] w-[25px] shrink-0">Z:</label>
      <Spin id="zoom" label="Zoom" value="140%" live className="h-[50px] w-[111px]" inputClass="pl-[9px] text-[18px]" cell="w-[22px]" />
      <label htmlFor="rotation" className="ml-2.5 w-[25px] shrink-0">R:</label>
      <Spin id="rotation" label="Rotation" value="0.00º" live className="mr-2.5 h-[50px] w-[122px]" inputClass="pr-3 text-right text-[18px]" cell="w-[22px]" />
    </footer>
  );
}

export default function App() {
  return (
    <div className="flex h-screen flex-col overflow-hidden border border-[#4a4a4a] bg-[#f6f5f4] font-['Open_Sans','Noto_Sans',sans-serif]">
      <Gradients />
      <TitleBar />
      <nav aria-label="Menu" className="flex h-[33px] shrink-0 items-center gap-[17px] border-b border-[#e0dddb] pt-[3px] pl-2 text-[16px] text-[#2e3436]">
        {MENUS.map((m) => (
          <button key={m} type="button">{m}</button>
        ))}
      </nav>

      <div className="flex shrink-0 flex-col gap-2 py-1 pl-1">
        <div className="flex">
          <Group items={[["Enable snapping", Snap.nodes, "on"]]} />
          <VSep />
          <Group items={[["Snap bounding boxes", Snap.nodes], ["Snap to edges", Snap.bbox, "off"], ["Snap to corners", Snap.corner, "off"], ["Snap edge midpoints", Snap.mid, "off"], ["Snap box centers", Snap.center, "off"]]} />
          <VSep />
          <Group items={[["Snap nodes", Snap.nodes, "on"], ["Snap to paths", Snap.path], ["Snap to intersections", Snap.cross], ["Snap cusp nodes", Snap.cusp, "on"], ["Snap smooth nodes", Snap.smooth], ["Snap line midpoints", Snap.hash]]} />
          <VSep />
          <Group items={[["Snap other points", Snap.nodes, "on"], ["Snap object centers", Snap.objMid], ["Snap rotation centers", Snap.rotation], ["Snap text baselines", Snap.text]]} />
          <VSep />
          <Group items={[["Snap to page border", Snap.page], ["Snap to grids", Snap.grid, "on"], ["Snap to guides", Snap.guides, "on"]]} />
        </div>
        <div className="flex">
          <Group items={[["New", Cmd.new], ["Open", Cmd.open], ["Save", Cmd.save], ["Print", Cmd.print]]} />
          <VSep />
          <Group items={[["Import", Cmd.importDoc], ["Export", Cmd.exportDoc]]} />
          <VSep />
          <Group items={[["Undo", Cmd.undo], ["Redo", Cmd.redo, "off"]]} />
          <VSep />
          <Group items={[["Copy", Cmd.copy], ["Cut", Cmd.cut], ["Paste", Cmd.paste]]} />
          <VSep />
          <Group items={[["Zoom selection", Cmd.zoomSel], ["Zoom drawing", Cmd.zoomDraw], ["Zoom page", Cmd.zoomPage], ["Zoom page width", Cmd.zoomWidth]]} />
          <VSep />
          <Group items={[["Duplicate", Cmd.duplicate], ["Clone", Cmd.clone], ["Unlink clone", Cmd.unlink]]} />
          <VSep />
          <Group items={[["Group", Cmd.group], ["Ungroup", Cmd.ungroup]]} />
          <VSep />
          <Group items={[["Fill and stroke", Cmd.fillStroke], ["Text and font", Cmd.text], ["Layers", Cmd.layers], ["XML editor", Cmd.xml], ["Align", Cmd.align]]} />
          <VSep />
          <Group items={[["Document properties", Cmd.docProps], ["Preferences", Cmd.prefs]]} />
        </div>
        <div className="flex items-center text-[17px] text-[#8f9293]">
          <Group tall items={[["Select all", Sel.all], ["Select all in layers", Sel.layers], ["Deselect", Sel.deselect, "off"]]} />
          <VSep />
          <Group tall items={[["Rotate left", Sel.ccw, "off"], ["Rotate right", Sel.cw, "off"], ["Flip horizontal", Sel.flipH, "off"], ["Flip vertical", Sel.flipV, "off"]]} />
          <VSep />
          <Group tall items={[["Lower to bottom", Sel.bottom, "off"], ["Lower", Sel.lower, "off"], ["Raise", Sel.raise, "off"], ["Raise to top", Sel.top, "off"]]} />
          <VSep />
          <label htmlFor="pos-x" className="ml-[3px] w-[18px] shrink-0">X:</label>
          <Spin id="pos-x" label="X" value="120.153" className="h-[39px] w-[150px]" inputClass="pl-[3px] text-[#b3b1ae]" cell="w-[17px]" />
          <label htmlFor="pos-y" className="ml-[7px] w-[18px] shrink-0">Y:</label>
          <Spin id="pos-y" label="Y" value="129.910" className="h-[39px] w-[150px]" inputClass="pl-[3px] text-[#b3b1ae]" cell="w-[17px]" />
          <label htmlFor="size-w" className="ml-[7px] w-[23px] shrink-0">W:</label>
          <Spin id="size-w" label="W" value="79.827" className="h-[39px] w-[143px]" inputClass="pl-[3px] text-[#b3b1ae]" cell="w-[17px]" />
          <button type="button" aria-label="Lock ratio" className="mr-3 ml-3.5 shrink-0"><Icon>{OpenLock}</Icon></button>
          <label htmlFor="size-h" className="w-5 shrink-0">H:</label>
          <Spin id="size-h" label="H" value="79.827" className="h-[39px] w-[143px]" inputClass="pl-[3px] text-[#b3b1ae]" cell="w-[17px]" />
          <span className="relative ml-1 flex shrink-0 items-center">
            <select aria-label="Units" className="h-[39px] w-[72px] appearance-none rounded-md border border-[#d5d0cc] bg-[#f8f7f6] pl-[11px] text-[17px] text-[#8f9293]">
              <option>mm</option>
            </select>
            <Caret className="right-3" />
          </span>
          <VSep />
          <Group tall items={[["Scale stroke width", Affect.stroke, "on"], ["Scale corner radii", Affect.corner, "on"], ["Move gradients", Affect.gradient, "on"], ["Move patterns", Affect.pattern, "on"]]} />
        </div>
      </div>

      <main className="flex min-h-0 flex-1">
        <Toolbox />
        <div className="grid min-w-0 flex-1 grid-cols-[18px_1fr_18px] grid-rows-[18px_1fr_18px]">
          <button type="button" aria-label="Lock guides" className="flex items-center justify-center rounded border border-[#d5d0cc]">
            <svg width="14" height="16" viewBox="0 0 14 16" fill="none" aria-hidden="true">
              <path d="M3.5 7 V4.5 C3.5 .5 10.5 .5 10.5 4.5 V7" stroke="#333" strokeWidth="1.8" />
              <rect x="1.5" y="7" width="11" height="7.5" rx=".5" fill="url(#gGold)" stroke="#222" />
              <path d="M7 9 V12.5" stroke="#222" strokeWidth="1.8" />
            </svg>
          </button>
          <div className="min-w-0 overflow-hidden"><TopRuler /></div>
          <button type="button" aria-label="Zoom with window" className="m-px flex items-center justify-center rounded border border-[#9b9b9b] bg-[#f6f5f4]">
            <svg width="6" height="9" viewBox="0 0 6 9" aria-hidden="true"><path d="M1 3.5 L3 .5 H5 V8.5 H2 V3.5 Z" fill="#fff" stroke="#888" /></svg>
          </button>
          <div className="min-h-0 overflow-hidden"><SideRuler /></div>
          <div className="min-h-0 min-w-0 overflow-hidden bg-white"><Drawing /></div>
          <div className="relative bg-[#edecea]"><div className="absolute top-[335px] left-[5px] h-[118px] w-[7px] rounded-full bg-[#7f8383]" /></div>
          <div />
          <div className="relative bg-[#edecea]"><div className="absolute top-1.5 left-[415px] h-[7px] w-[343px] rounded-full bg-[#7f8383]" /></div>
          <button type="button" aria-label="Color-managed view" className="flex items-center justify-center rounded border border-[#d5d0cc]">
            <svg width="14" height="16" viewBox="0 0 14 16" aria-hidden="true">
              <path d="M2 1 C6 2 12 9 13 13 L4 15.5 Z" fill="#c4efd0" />
              <path d="M4 15.5 L13 13 L8 9 Z" fill="#f6b8c8" />
              <path d="M4 15.5 L3 9 L8 9 Z" fill="#c4cdf8" />
            </svg>
          </button>
        </div>
        <Dock />
      </main>

      <Palette />
      <div className="relative h-3 shrink-0 bg-[#edecea]">
        <div className="absolute top-[3px] left-[3px] h-1.5 w-[301px] rounded-full bg-[#7f8383]" />
        <div className="absolute top-0 right-0 h-full w-9 bg-[#f6f5f4]" />
      </div>
      <StatusBar />
    </div>
  );
}
